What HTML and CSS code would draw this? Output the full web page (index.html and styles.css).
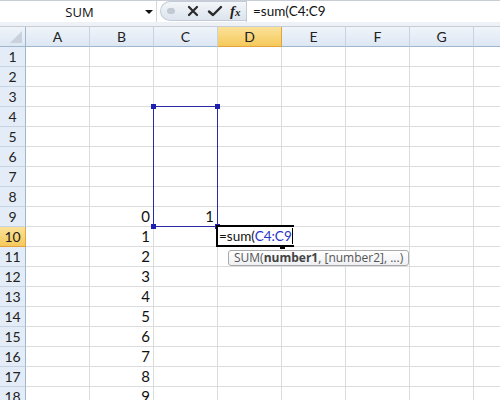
FILE: index.html
```html
<!DOCTYPE html>
<html>
<head>
<meta charset="utf-8">
<link rel="stylesheet" href="styles.css">
</head>
<body>
<div class="app">
  <div class="fbar">
    <div class="namebox"><span class="nb-text">SUM</span><span class="nb-arrow"></span></div>
    <div class="pill">
      <span class="grip"></span>
      <svg class="ico" width="14" height="14" viewBox="0 0 14 14"><path d="M3 3 L11 11 M11 3 L3 11" stroke="#2a2a2a" stroke-width="2.2" stroke-linecap="round"/></svg>
      <svg class="ico" width="16" height="14" viewBox="0 0 16 14"><path d="M2 7.5 L6 11 L14 3" stroke="#2a2a2a" stroke-width="2.4" fill="none" stroke-linecap="round" stroke-linejoin="round"/></svg>
      <span class="fx"><i>f</i><i class="x">x</i></span>
    </div>
    <div class="formula">=sum(C4:C9</div>
  </div>
  <div class="band"></div>
  <div class="sheet">
    <div class="grid">
      <div class="hd corner"><span class="tri"></span></div>
      <div class="hd col">A</div><div class="hd col">B</div><div class="hd col">C</div><div class="hd col active">D</div><div class="hd col">E</div><div class="hd col">F</div><div class="hd col">G</div><div class="hd col"></div>

      <div class="hd row">1</div><div class="c"></div><div class="c"></div><div class="c"></div><div class="c"></div><div class="c"></div><div class="c"></div><div class="c"></div><div class="c"></div>
      <div class="hd row">2</div><div class="c"></div><div class="c"></div><div class="c"></div><div class="c"></div><div class="c"></div><div class="c"></div><div class="c"></div><div class="c"></div>
      <div class="hd row">3</div><div class="c"></div><div class="c"></div><div class="c"></div><div class="c"></div><div class="c"></div><div class="c"></div><div class="c"></div><div class="c"></div>
      <div class="hd row">4</div><div class="c"></div><div class="c"></div><div class="c"></div><div class="c"></div><div class="c"></div><div class="c"></div><div class="c"></div><div class="c"></div>
      <div class="hd row">5</div><div class="c"></div><div class="c"></div><div class="c"></div><div class="c"></div><div class="c"></div><div class="c"></div><div class="c"></div><div class="c"></div>
      <div class="hd row">6</div><div class="c"></div><div class="c"></div><div class="c"></div><div class="c"></div><div class="c"></div><div class="c"></div><div class="c"></div><div class="c"></div>
      <div class="hd row">7</div><div class="c"></div><div class="c"></div><div class="c"></div><div class="c"></div><div class="c"></div><div class="c"></div><div class="c"></div><div class="c"></div>
      <div class="hd row">8</div><div class="c"></div><div class="c"></div><div class="c"></div><div class="c"></div><div class="c"></div><div class="c"></div><div class="c"></div><div class="c"></div>
      <div class="hd row">9</div><div class="c"></div><div class="c n">0</div><div class="c n">1</div><div class="c"></div><div class="c"></div><div class="c"></div><div class="c"></div><div class="c"></div>
      <div class="hd row active">10</div><div class="c"></div><div class="c n">1</div><div class="c"></div><div class="c"></div><div class="c"></div><div class="c"></div><div class="c"></div><div class="c"></div>
      <div class="hd row">11</div><div class="c"></div><div class="c n">2</div><div class="c"></div><div class="c"></div><div class="c"></div><div class="c"></div><div class="c"></div><div class="c"></div>
      <div class="hd row">12</div><div class="c"></div><div class="c n">3</div><div class="c"></div><div class="c"></div><div class="c"></div><div class="c"></div><div class="c"></div><div class="c"></div>
      <div class="hd row">13</div><div class="c"></div><div class="c n">4</div><div class="c"></div><div class="c"></div><div class="c"></div><div class="c"></div><div class="c"></div><div class="c"></div>
      <div class="hd row">14</div><div class="c"></div><div class="c n">5</div><div class="c"></div><div class="c"></div><div class="c"></div><div class="c"></div><div class="c"></div><div class="c"></div>
      <div class="hd row">15</div><div class="c"></div><div class="c n">6</div><div class="c"></div><div class="c"></div><div class="c"></div><div class="c"></div><div class="c"></div><div class="c"></div>
      <div class="hd row">16</div><div class="c"></div><div class="c n">7</div><div class="c"></div><div class="c"></div><div class="c"></div><div class="c"></div><div class="c"></div><div class="c"></div>
      <div class="hd row">17</div><div class="c"></div><div class="c n">8</div><div class="c"></div><div class="c"></div><div class="c"></div><div class="c"></div><div class="c"></div><div class="c"></div>
      <div class="hd row">18</div><div class="c"></div><div class="c n">9</div><div class="c"></div><div class="c"></div><div class="c"></div><div class="c"></div><div class="c"></div><div class="c"></div>
    </div>
    <div class="range">
      <span class="h tl"></span><span class="h tr"></span><span class="h bl"></span><span class="h br"></span>
    </div>
    <div class="edit">=sum(<span class="ref">C4:C9</span><span class="caret"></span></div>
    <div class="fill"></div>
    <div class="tip">SUM(<b>number1</b>, [number2], ...)</div>
  </div>
</div>
</body>
</html>
```
FILE: styles.css
```css
html, body { margin: 0; padding: 0; background: #fff; }
body { width: 500px; height: 400px; overflow: hidden; font-family: "Lato", "Open Sans", sans-serif; }
.app { width: 500px; height: 400px; overflow: hidden; }

.fbar { display: flex; height: 22px; background: #fff; border-top: 1px solid #c9ced6; box-sizing: border-box; }
.namebox { width: 157px; display: flex; align-items: center; position: relative; border-right: 1px solid #d4d8de; box-sizing: border-box; }
.nb-text { flex: 1; text-align: center; font-family: "Open Sans", sans-serif; font-size: 13px; color: #111; padding-left: 14px; }
.nb-arrow { width: 0; height: 0; border-left: 4px solid transparent; border-right: 4px solid transparent; border-top: 4px solid #111; margin-right: 3px; }

.pill { width: 86px; margin-left: 3px; height: 20px; display: flex; align-items: center; gap: 7px; padding-left: 6px; box-sizing: border-box;
  background: linear-gradient(#f3f6fa, #dde4ed); border: 1px solid #c3cbd6; border-right: none; border-radius: 10px 0 0 10px; }
.grip { width: 8px; height: 6px; border-radius: 4px; background: #c2c9d3; margin-right: 4px; }
.ico { display: block; }
.fx { font-family: "Liberation Serif", serif; font-size: 15px; color: #222; font-weight: bold; line-height: 1; }
.fx .x { font-size: 11px; }
.formula { flex: 1; padding-left: 6px; font-size: 13.5px; line-height: 20px; color: #111; border-left: 1px solid #c3cbd6; }

.band { height: 4px; background: #eef1f5; border-bottom: 1px solid #c6cdd6; }

.sheet { position: relative; }
.grid { display: grid; grid-template-columns: 26px repeat(8, 64px); grid-template-rows: 20px; grid-auto-rows: 20px; }
.hd { box-sizing: border-box; border-right: 1px solid #9eb6ce; border-bottom: 1px solid #9eb6ce; background: linear-gradient(#f0f4fa, #dde7f3);
  color: #222; font-size: 14px; display: flex; align-items: center; justify-content: center; }
.hd.row { background: #e4ecf7; border-right: 1px solid #9eb6ce; border-bottom: 1px solid #c5d3e3; }
.hd.col { border-right: 1px solid #c5d3e3; }
.hd.active { background: linear-gradient(#fbe29a, #f5c95b); border-color: #e2a23c; }
.corner { position: relative; }
.tri { position: absolute; right: 3px; bottom: 3px; width: 0; height: 0; border-left: 12px solid transparent; border-bottom: 12px solid #c8d1dc; }
.c { box-sizing: border-box; border-right: 1px solid #dadcdd; border-bottom: 1px solid #dadcdd; font-size: 15px; color: #111; line-height: 19px; }
.c.n { text-align: right; padding-right: 3px; }

.range { position: absolute; left: 153px; top: 79px; width: 65px; height: 121px; box-sizing: border-box; border: 1px solid #2a2aa8; }
.h { position: absolute; width: 5px; height: 5px; background: #1f1fb0; }
.tl { left: -3px; top: -3px; }
.tr { right: -3px; top: -3px; }
.bl { left: -3px; bottom: -3px; }
.br { right: -3px; bottom: -3px; background: #fff; border: 1px solid #1f1fb0; width: 3px; height: 3px; }

.edit { position: absolute; left: 216px; top: 198px; min-width: 66px; height: 22px; box-sizing: border-box; border: 2px solid #000; border-right: none;
  background: #fff; font-size: 13.5px; line-height: 18px; color: #111; padding-left: 1px; padding-right: 1px; white-space: nowrap; }
.ref { color: #2a34c9; }
.caret { display: inline-block; width: 1px; height: 16px; background: #000; vertical-align: -3px; }
.fill { position: absolute; left: 280px; top: 218px; width: 5px; height: 4px; background: #000; }

.tip { position: absolute; left: 228px; top: 223px; height: 16px; box-sizing: border-box; padding: 0 5px; border: 1px solid #a9a9a9; border-radius: 3px;
  background: linear-gradient(#ffffff, #eef0f3); font-family: "Open Sans", sans-serif; font-size: 12px; line-height: 14px; color: #555; white-space: nowrap; }
.tip b { color: #444; }
```
